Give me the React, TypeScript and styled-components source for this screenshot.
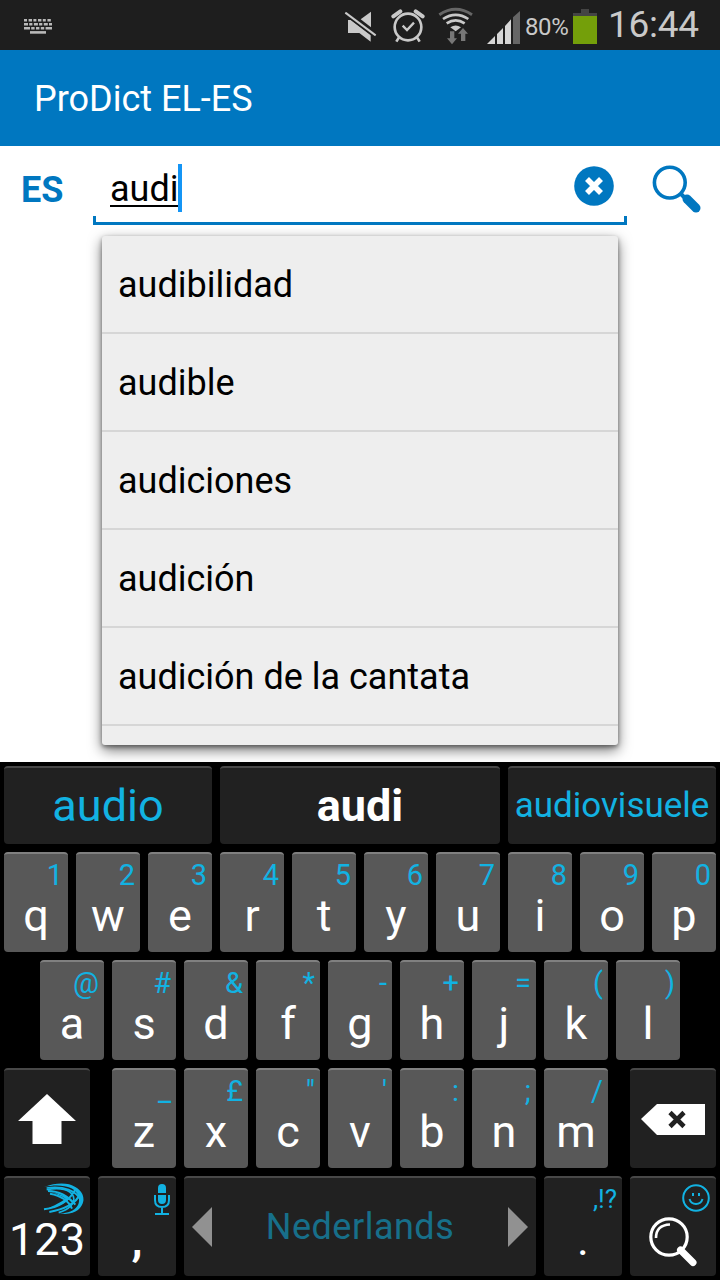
import React from "react";
import styled, { createGlobalStyle } from "styled-components";

const GlobalStyle = createGlobalStyle`
  * { box-sizing: border-box; }
  body { margin: 0; background: #fff; font-family: Roboto, "Liberation Sans", sans-serif; }
  svg { display: block; flex: none; }
`;

const BLUE = "#0077c0";
const CYAN = "#12b2e2";

const Screen = styled.div`
  width: 720px;
  height: 1280px;
  display: flex;
  flex-direction: column;
  overflow: hidden;
  background: #fff;
`;

const StatusBar = styled.header`
  height: 50px;
  flex: none;
  display: flex;
  align-items: flex-start;
  background: #1e1e1e;
  color: #c9c9c9;
`;

const StatusIcon = styled.svg<{ $left: number; $top: number }>`
  margin-left: ${(p) => p.$left}px;
  margin-top: ${(p) => p.$top}px;
`;

const BatteryText = styled.span`
  width: 49px;
  margin-left: 5px;
  font-size: 24px;
  line-height: 54px;
  letter-spacing: -0.4px;
`;

const Clock = styled.span`
  margin-left: 11px;
  font-size: 37px;
  line-height: 50px;
  letter-spacing: -0.3px;
`;

const TitleBar = styled.h1`
  height: 96px;
  flex: none;
  margin: 0;
  padding-left: 34px;
  background: ${BLUE};
  color: #fff;
  font-size: 36px;
  font-weight: 400;
  line-height: 99px;
`;

const SearchRow = styled.div`
  height: 79px;
  flex: none;
  display: flex;
`;

const Language = styled.span`
  width: 93px;
  padding-left: 21px;
  color: ${BLUE};
  font-size: 36px;
  font-weight: 700;
  line-height: 89px;
`;

const Field = styled.div`
  width: 534px;
  padding: 18px 13px 0 17px;
  display: flex;
  align-items: flex-start;
  background:
    linear-gradient(${BLUE}, ${BLUE}) left bottom / 3px 9px no-repeat,
    linear-gradient(${BLUE}, ${BLUE}) right bottom / 3px 9px no-repeat,
    linear-gradient(${BLUE}, ${BLUE}) left bottom / 100% 3px no-repeat;
`;

const Typed = styled.span`
  width: 69px;
  height: 43px;
  border-bottom: 2px solid #000;
  color: #000;
  font-size: 36px;
  line-height: 51px;
  white-space: nowrap;
`;

const Caret = styled.span`
  width: 4px;
  height: 48px;
  margin-left: -1px;
  background: #1495f5;
`;

const ClearButton = styled.svg`
  margin: 2px 0 0 auto;
`;

const SearchButton = styled.svg`
  margin: 18px 0 0 25px;
`;

const Dropdown = styled.ul`
  width: 516px;
  height: 509px;
  flex: none;
  margin: 11px 0 0 102px;
  padding: 0;
  list-style: none;
  overflow: hidden;
  border-radius: 3px;
  background: #eee;
  box-shadow: 0 5px 14px rgba(0, 0, 0, 0.55), 0 2px 4px rgba(0, 0, 0, 0.4);
`;

const Entry = styled.li`
  height: 98px;
  padding-left: 16px;
  border-bottom: 2px solid #d6d6d6;
  color: #000;
  font-size: 36px;
  line-height: 99px;
`;

const Keyboard = styled.section`
  height: 518px;
  flex: none;
  margin-top: auto;
  padding: 4px;
  display: flex;
  flex-direction: column;
  gap: 8px;
  background: #000;
  z-index: 1;
`;

const Suggestions = styled.div`
  height: 78px;
  display: grid;
  grid-template-columns: 208px 280px 208px;
  gap: 8px;
`;

const Suggestion = styled.div<{ $main?: boolean; $size: number }>`
  border-radius: 4px;
  border-top: 2px solid #484848;
  background: #212121;
  color: ${(p) => (p.$main ? "#fff" : CYAN)};
  font-size: ${(p) => p.$size}px;
  font-weight: ${(p) => (p.$main ? 700 : 400)};
  line-height: 76px;
  text-align: center;
  white-space: nowrap;
`;

const KeyRow = styled.div<{ $inset?: number }>`
  height: 100px;
  display: flex;
  gap: 8px;
  padding: 0 ${(p) => p.$inset ?? 0}px;
`;

const KeyCap = styled.div<{ $dark?: boolean; $w?: number }>`
  width: ${(p) => p.$w ?? 64}px;
  height: 100px;
  flex: none;
  display: flex;
  flex-direction: column;
  border-radius: 4px;
  border-top: 2px solid ${(p) => (p.$dark ? "#484848" : "#808080")};
  background: ${(p) => (p.$dark ? "#212121" : "#585858")};
`;

const Hint = styled.span<{ $size?: number }>`
  height: 38px;
  padding: 4px 5px 0 0;
  color: ${CYAN};
  font-size: ${(p) => p.$size ?? 29}px;
  line-height: 34px;
  text-align: right;
`;

const Letter = styled.span<{ $bold?: boolean }>`
  color: #fff;
  font-size: 45px;
  font-weight: ${(p) => (p.$bold ? 700 : 400)};
  line-height: 47px;
  text-align: center;
`;

const LetterGroup = styled.div`
  display: flex;
  gap: 8px;
  margin: 0 14px;
`;

const Centered = styled(KeyCap)`
  align-items: center;
  justify-content: center;
`;

const IconHint = styled.div<{ $right: number }>`
  height: 38px;
  padding: 5px ${(p) => p.$right}px 0 0;
  display: flex;
  justify-content: flex-end;
`;

const SpaceKey = styled(KeyCap)`
  flex-direction: row;
  align-items: center;
  justify-content: space-between;
  padding: 0 8px;
`;

const SpaceLabel = styled.span`
  color: #176f8a;
  font-size: 36px;
  line-height: 98px;
  letter-spacing: 0.5px;
`;

const LensIcon = styled.svg`
  margin: 1px 0 0 18px;
`;

const entries = ["audibilidad", "audible", "audiciones", "audición", "audición de la cantata"];
const rowOne = ["q1", "w2", "e3", "r4", "t5", "y6", "u7", "i8", "o9", "p0"];
const rowTwo = ["a@", "s#", "d&", "f*", "g-", "h+", "j=", "k(", "l)"];
const rowThree = ["z_", "x£", "c\"", "v'", "b:", "n;", "m/"];

const LetterKey = ({ pair }: { pair: string }) => (
  <KeyCap>
    <Hint>{pair[1]}</Hint>
    <Letter>{pair[0]}</Letter>
  </KeyCap>
);

const KeyboardGlyph = () => (
  <StatusIcon $left={24} $top={19} width="28" height="15" viewBox="0 0 28 15" stroke="#b9b9b9" fill="none">
    <path d="M0 1.3H28" strokeWidth="2.6" strokeDasharray="3 1.6 3.4 1.4" />
    <path d="M0 5.2H28" strokeWidth="2.6" strokeDasharray="4 1.2 3.2 1.5" />
    <path d="M0 9.2H28" strokeWidth="2.6" strokeDasharray="6 1.2 3.4 1.4 3.4 1.4 3.4 1.4 6.4 2" />
    <path d="M6 13.4H22" strokeWidth="2.6" />
  </StatusIcon>
);

const StatusIcons = () => (
  <>
    <StatusIcon $left={292} $top={11} width="34" height="32" viewBox="12 33 102 96" fill="#c9c9c9">
      <path d="M93 35V82L62 58Z" />
      <path d="M24 60H32L92 106V125L58 99H24Z" />
      <path d="M16 38L107 106" stroke="#1e1e1e" strokeWidth="15" />
      <path d="M16 38L107 106" stroke="#c9c9c9" strokeWidth="6" />
    </StatusIcon>
    <StatusIcon $left={13} $top={9} width="34" height="34" viewBox="154 27 102 102" fill="none" stroke="#c9c9c9">
      <circle cx="205" cy="81" r="40" strokeWidth="8" />
      <path d="M189 77L202 90L223 68" strokeWidth="7" />
      <path d="M161 49L182 34M228 34L249 49" strokeWidth="12" strokeLinecap="round" />
      <path d="M178 112L170 125M232 112L240 125" strokeWidth="8" />
    </StatusIcon>
    <StatusIcon $left={13} $top={7} width="36" height="38" viewBox="294 21 108 114" fill="none" stroke="#c9c9c9" strokeWidth="8">
      <path d="M298 44Q347 12 396 44" stroke="#666" strokeWidth="9" />
      <path d="M309 57Q347 32 385 57" />
      <path d="M320 70Q347 52 374 70" />
      <path d="M331 82Q347 71 363 82L347 94Z" fill="#c9c9c9" stroke="none" />
      <path d="M330 94H343V115H351L336 133L321 115H330Z" fill="#777" stroke="none" />
      <path d="M363 123H376V101H384L369 84L354 101H363Z" fill="#777" stroke="none" />
    </StatusIcon>
    <StatusIcon $left={13} $top={11} width="33" height="33" viewBox="441 33 99 99" fill="#d6d6d6">
      <path d="M441 132L465 108V132ZM471 102L489 84V132H471ZM495 78L513 58V132H495Z" />
      <path d="M519 52L540 33V132H519Z" fill="#666" />
    </StatusIcon>
  </>
);

const Battery = () => (
  <StatusIcon $left={-1} $top={9} width="24" height="35" viewBox="0 0 24 35">
    <path d="M8 0H16V4H24V7H0V4H8Z" fill="#444" />
    <path d="M0 7H24V35H0Z" fill="#749f0a" />
  </StatusIcon>
);

const SwiftGlyph = () => (
  <svg width="42" height="32" viewBox="126 370 126 96" fill="none" stroke={CYAN}>
    <path d="M132 382C170 368 205 369 226 382C246 394 252 409 250 424C246 447 222 469 178 461C200 462 222 454 232 439C244 420 234 397 214 386C190 375 160 376 132 382Z" fill={CYAN} stroke="none" />
    <path d="M140 390C180 382 211 389 220 410C227 431 207 449 176 459" strokeWidth="5" />
    <path d="M144 394C174 394 201 405 226 435M150 402C178 407 205 421 216 447" strokeWidth="6" />
    <path d="M132 449C175 444 210 421 228 386M148 457C190 450 230 432 240 402" strokeWidth="6" />
    <path d="M140 385C190 378 230 392 243 424" strokeWidth="5" />
    <path d="M153 398C180 403 199 410 208 418C196 429 174 443 136 449C164 437 184 427 196 417C184 410 169 403 153 398Z" fill={CYAN} stroke="none" />
  </svg>
);

export default function App() {
  return (
    <Screen>
      <GlobalStyle />
      <StatusBar>
        <KeyboardGlyph />
        <StatusIcons />
        <BatteryText>80%</BatteryText>
        <Battery />
        <Clock>16:44</Clock>
      </StatusBar>
      <TitleBar>ProDict EL-ES</TitleBar>
      <SearchRow>
        <Language>ES</Language>
        <Field>
          <Typed>audi</Typed>
          <Caret />
          <ClearButton width="40" height="40" viewBox="0 0 40 40">
            <circle cx="20" cy="20" r="19.8" fill={BLUE} />
            <path d="M13 13L27 27M27 13L13 27" stroke="#fff" strokeWidth="5.6" />
          </ClearButton>
        </Field>
        <SearchButton width="50" height="51" viewBox="0 0 50 51" fill="none" stroke={BLUE}>
          <circle cx="17.8" cy="18.6" r="15.4" strokeWidth="3.6" />
          <path d="M28 29L34 35" strokeWidth="4" />
          <path d="M35 35L44 44" strokeWidth="9" strokeLinecap="round" strokeLinejoin="round" />
        </SearchButton>
      </SearchRow>
      <Dropdown>
        {entries.map((e) => (
          <Entry key={e}>{e}</Entry>
        ))}
      </Dropdown>
      <Keyboard>
        <Suggestions>
          <Suggestion $size={45}>audio</Suggestion>
          <Suggestion $size={45} $main>audi</Suggestion>
          <Suggestion $size={35}>audiovisuele</Suggestion>
        </Suggestions>
        <KeyRow>{rowOne.map((k) => <LetterKey key={k} pair={k} />)}</KeyRow>
        <KeyRow $inset={36}>{rowTwo.map((k) => <LetterKey key={k} pair={k} />)}</KeyRow>
        <KeyRow>
          <Centered $dark $w={86}>
            <svg width="58" height="50" viewBox="0 0 58 50">
              <path d="M29 0L58 27H43.5V50H14.5V27H0Z" fill="#fff" />
            </svg>
          </Centered>
          <LetterGroup>{rowThree.map((k) => <LetterKey key={k} pair={k} />)}</LetterGroup>
          <Centered $dark $w={86}>
            <svg width="64" height="31" viewBox="0 0 64 31">
              <path d="M0 15L16 0H64V31H16Z" fill="#fff" />
              <path d="M29 8.5L43 22.5M43 8.5L29 22.5" stroke="#212121" strokeWidth="4.6" />
            </svg>
          </Centered>
        </KeyRow>
        <KeyRow>
          <KeyCap $dark $w={86}>
            <IconHint $right={6}><SwiftGlyph /></IconHint>
            <Letter>123</Letter>
          </KeyCap>
          <KeyCap $dark $w={78}>
            <IconHint $right={6}>
              <svg width="16" height="33" viewBox="0 0 16 33" fill="none" stroke={CYAN}>
                <path d="M4 10V5Q4 1 8 1Q12 1 12 5V10ZM4 12H12V17Q12 21 8 21Q4 21 4 17Z" fill={CYAN} stroke="none" />
                <path d="M1 12V17Q1 24 8 24Q15 24 15 17V12M8 24V31M1 31H15" strokeWidth="2" />
              </svg>
            </IconHint>
            <Letter $bold>,</Letter>
          </KeyCap>
          <SpaceKey $dark $w={352}>
            <svg width="20" height="40" viewBox="0 0 20 40"><path d="M0 20L20 0V40Z" fill="#919191" /></svg>
            <SpaceLabel>Nederlands</SpaceLabel>
            <svg width="20" height="40" viewBox="0 0 20 40"><path d="M20 20L0 0V40Z" fill="#919191" /></svg>
          </SpaceKey>
          <KeyCap $dark $w={78}>
            <Hint $size={26}>,!?</Hint>
            <Letter>.</Letter>
          </KeyCap>
          <KeyCap $dark $w={86}>
            <IconHint $right={6}>
              <svg width="28" height="30" viewBox="0 0 28 30" fill="none" stroke={CYAN}>
                <circle cx="14" cy="15" r="12.8" strokeWidth="2" />
                <path d="M7.5 16Q9 21 14 21Q19 21 20.5 16" strokeWidth="2" />
                <path d="M11 10V13M17 10V13" strokeWidth="2" />
              </svg>
            </IconHint>
            <LensIcon width="50" height="51" viewBox="0 0 50 51" fill="none" stroke="#fff">
              <circle cx="21" cy="20" r="18.2" strokeWidth="3.2" />
              <path d="M8 21Q8 8 22 7.5" strokeWidth="2.6" />
              <path d="M32.5 33L45 45.5" strokeWidth="7" strokeLinecap="round" />
            </LensIcon>
          </KeyCap>
        </KeyRow>
      </Keyboard>
    </Screen>
  );
}
